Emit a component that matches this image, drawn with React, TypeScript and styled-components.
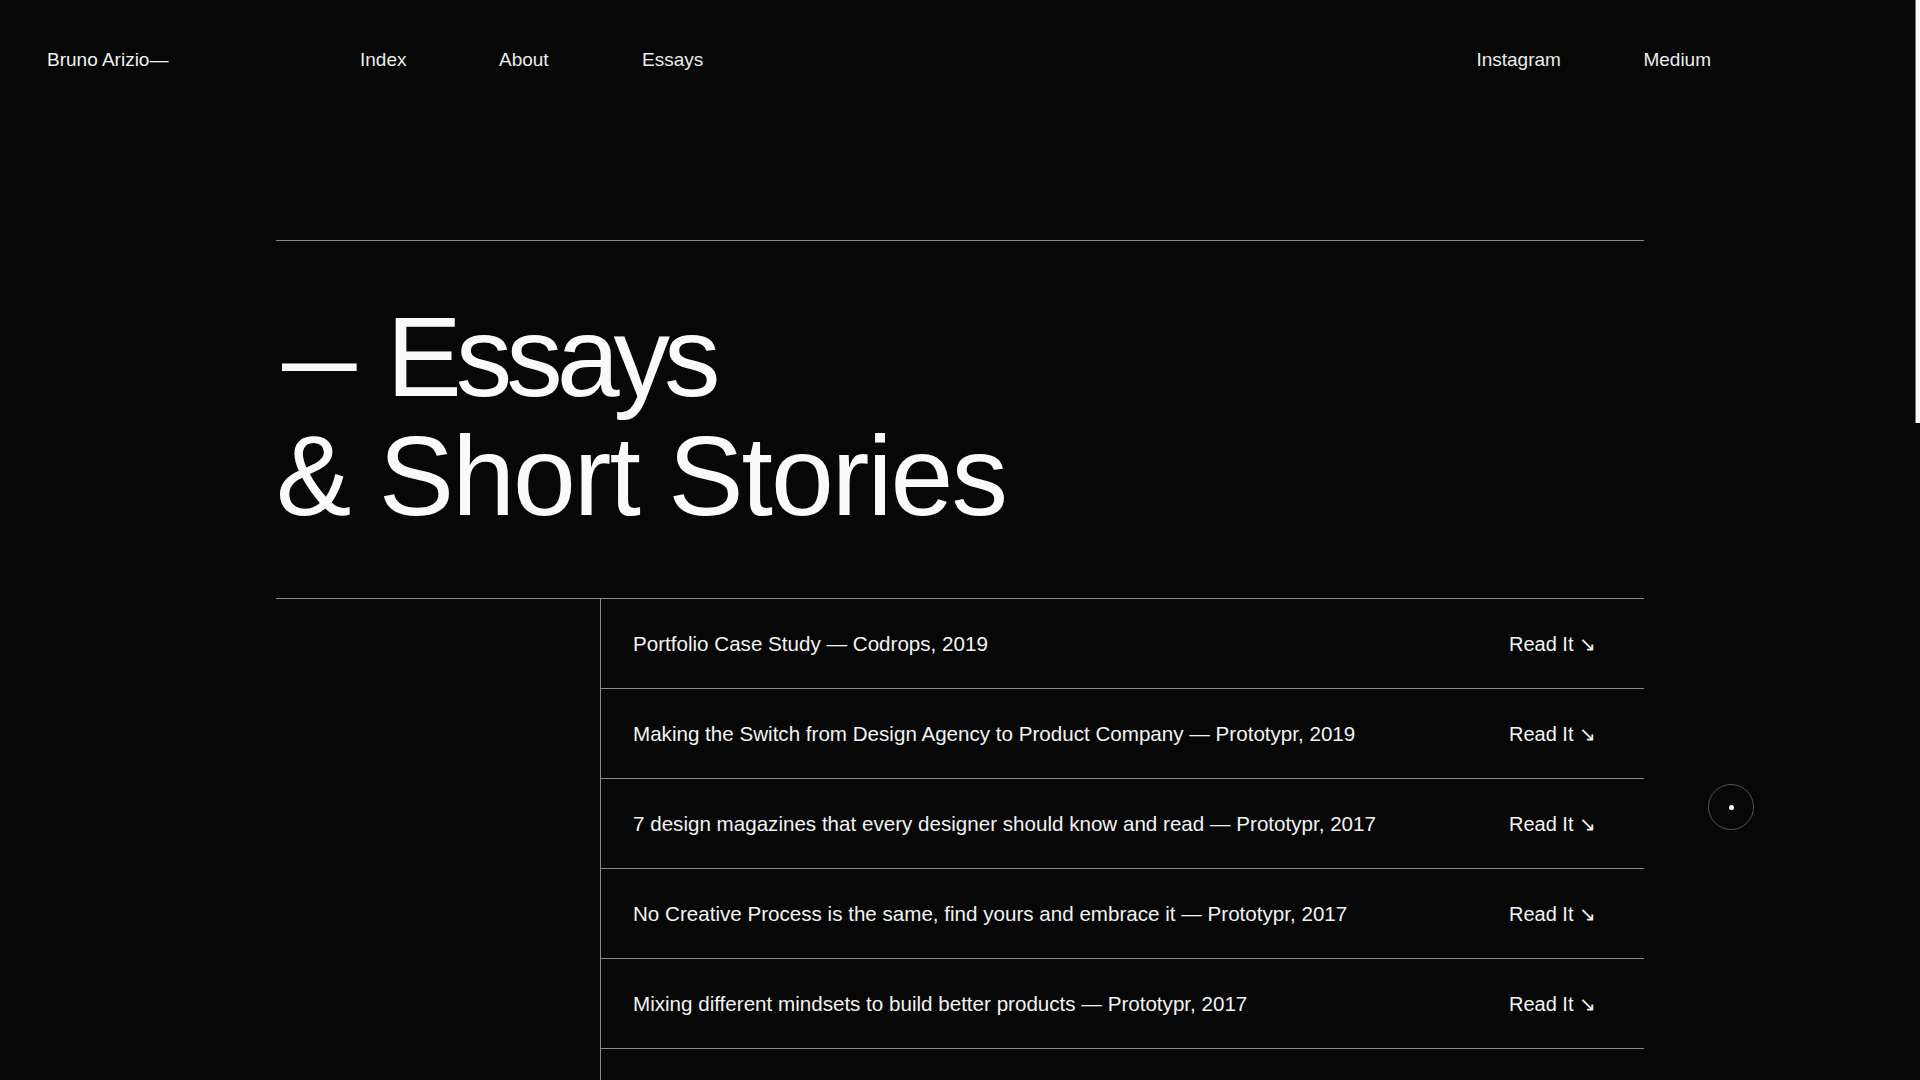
import React from 'react';
import styled, { createGlobalStyle } from 'styled-components';

const essays = [
  'Portfolio Case Study — Codrops, 2019',
  'Making the Switch from Design Agency to Product Company — Prototypr, 2019',
  '7 design magazines that every designer should know and read — Prototypr, 2017',
  'No Creative Process is the same, find yours and embrace it — Prototypr, 2017',
  'Mixing different mindsets to build better products — Prototypr, 2017',
];

const App = () => {
  return (
    <>
      <GlobalStyle />
      <Page>
        <Header>
          <Logo>Bruno Arizio—</Logo>
          <NavGroup>
            <NavLink $w={139}>Index</NavLink>
            <NavLink $w={143}>About</NavLink>
            <NavLink>Essays</NavLink>
          </NavGroup>
          <NavGroup $right>
            <NavLink $w={167}>Instagram</NavLink>
            <NavLink>Medium</NavLink>
          </NavGroup>
        </Header>

        <Main>
          <Title>
            <Dash>—</Dash> <Tight>Essays</Tight>
            <br />
            &amp; Short Stories
          </Title>
          <List>
            <Aside />
            <Rows>
              {essays.map((e) => (
                <Row key={e}>
                  <p>{e}</p>
                  <ReadIt>Read It ↘</ReadIt>
                </Row>
              ))}
            </Rows>
          </List>
        </Main>

        <Cursor />
        <ScrollThumb />
      </Page>
    </>
  );
};

export default App;

const GlobalStyle = createGlobalStyle`
html, body {
  margin:0;
  padding:0;
  background:#070707;
  overflow:hidden;
}
body{
  font-family:"Liberation Sans", Arial, sans-serif;
  color:#f2f2f2;
}
`

const Page = styled.div`
width:100vw;
height:100vh;
overflow:hidden;
`

const Header = styled.header`
height:120px;
display:flex;
align-items:center;
padding:0 0 0 47px;
font-size:19px;
`

const Logo = styled.div`
width:313px;
`

const NavGroup = styled.nav<{ $right?: boolean }>`
display:flex;
align-items:center;
margin-left:${(p) => (p.$right ? 'auto' : '0')};
padding-right:${(p) => (p.$right ? '209px' : '0')};
`

const NavLink = styled.a<{ $w?: number }>`
display:block;
width:${(p) => (p.$w ? p.$w + 'px' : 'auto')};
color:#ececec;
cursor:pointer;
`

const Main = styled.main`
width:1368px;
margin:0 auto;
border-top:1px solid #8a8a8a;
margin-top:120px;
`

const Title = styled.h1`
margin:57px 0 62px;
font-size:113px;
line-height:119px;
font-weight:400;
letter-spacing:-2px;
color:#fafafa;
`

// the dash in the original face is much shorter than Arial's em dash
const Dash = styled.span`
display:inline-block;
margin-left:6px;
transform:scaleX(0.66);
transform-origin:left center;
margin-right:-36px;
`

const Tight = styled.span`
letter-spacing:-6px;
`

const List = styled.section`
display:flex;
border-top:1px solid #8a8a8a;
`

const Aside = styled.div`
width:324px;
flex-shrink:0;
`

const Rows = styled.div`
flex:1;
border-left:1px solid #8a8a8a;
padding-bottom:200px;
`

const Row = styled.div`
height:89px;
display:flex;
align-items:center;
justify-content:space-between;
padding:0 48px 0 32px;
border-bottom:1px solid #8a8a8a;
font-size:20.6px;
> p {
  margin:0;
}
`

const ReadIt = styled.a`
cursor:pointer;
white-space:nowrap;
font-size:20px;
`

const Cursor = styled.div`
position:fixed;
left:1708px;
top:784px;
width:44px;
height:44px;
border:1px solid #555;
border-radius:50%;
display:flex;
align-items:center;
justify-content:center;
&::after{
  content:'';
  width:5px;
  height:5px;
  border-radius:50%;
  background:#fff;
}
`

const ScrollThumb = styled.div`
position:fixed;
right:0;
top:0;
width:4px;
height:423px;
background:#fafafa;
border-left:1px solid #777;
`
